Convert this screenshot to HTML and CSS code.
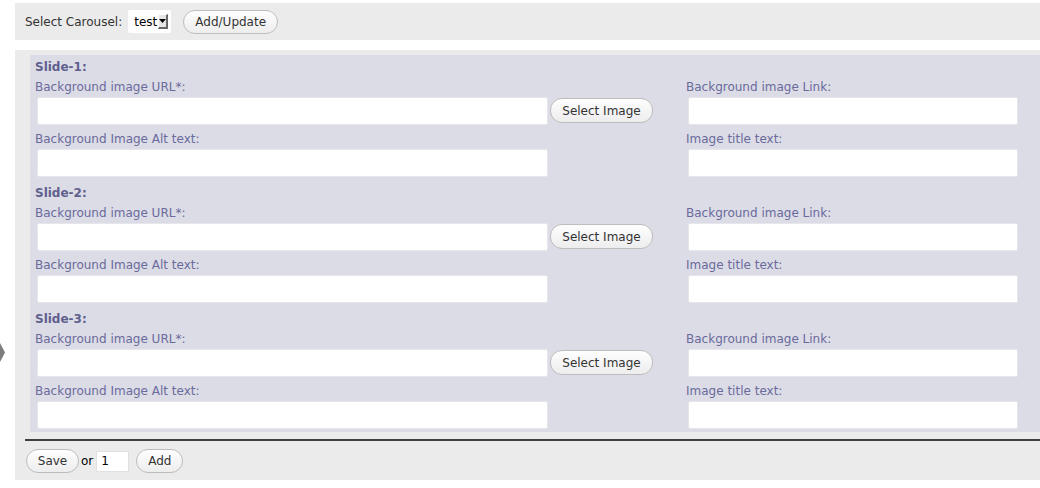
FILE: index.html
```html
<!DOCTYPE html>
<html>
<head>
<meta charset="utf-8">
<link rel="stylesheet" href="styles.css">
</head>
<body>
<div class="arrow"></div>
<div class="page">
  <div class="topbar">
    <span class="tlabel">Select Carousel:</span>
    <span class="select"><span class="sval">test</span><span class="sbtn"><svg width="7" height="4" viewBox="0 0 7 4"><path d="M0 0H7L3.5 4Z" fill="#000"/></svg></span></span>
    <button class="btn btn-top">Add/Update</button>
  </div>
  <div class="main">
    <div class="slides">
      <div class="slide">
        <div class="stitle">Slide-1:</div>
        <div class="grid">
          <label class="lbl">Background image URL*:</label>
          <span></span>
          <label class="lbl">Background image Link:</label>
          <input class="inp inp-l" type="text">
          <button class="btn btn-sel">Select Image</button>
          <input class="inp inp-r" type="text">
          <label class="lbl lbl2">Background Image Alt text:</label>
          <span></span>
          <label class="lbl lbl2">Image title text:</label>
          <input class="inp inp-l" type="text">
          <span></span>
          <input class="inp inp-r" type="text">
        </div>
      </div>
      <div class="slide">
        <div class="stitle">Slide-2:</div>
        <div class="grid">
          <label class="lbl">Background image URL*:</label>
          <span></span>
          <label class="lbl">Background image Link:</label>
          <input class="inp inp-l" type="text">
          <button class="btn btn-sel">Select Image</button>
          <input class="inp inp-r" type="text">
          <label class="lbl lbl2">Background Image Alt text:</label>
          <span></span>
          <label class="lbl lbl2">Image title text:</label>
          <input class="inp inp-l" type="text">
          <span></span>
          <input class="inp inp-r" type="text">
        </div>
      </div>
      <div class="slide">
        <div class="stitle">Slide-3:</div>
        <div class="grid">
          <label class="lbl">Background image URL*:</label>
          <span></span>
          <label class="lbl">Background image Link:</label>
          <input class="inp inp-l" type="text">
          <button class="btn btn-sel">Select Image</button>
          <input class="inp inp-r" type="text">
          <label class="lbl lbl2">Background Image Alt text:</label>
          <span></span>
          <label class="lbl lbl2">Image title text:</label>
          <input class="inp inp-l" type="text">
          <span></span>
          <input class="inp inp-r" type="text">
        </div>
      </div>
    </div>
    <div class="footer">
      <button class="btn btn-save">Save</button>
      <span class="or">or</span>
      <input class="num" type="text" value="1">
      <button class="btn btn-add">Add</button>
    </div>
  </div>
</div>
</body>
</html>
```

FILE: styles.css
```css
* { box-sizing: border-box; }
html, body { margin: 0; padding: 0; background: #fff; }
body {
  font-family: "DejaVu Sans", sans-serif;
  font-size: 12px;
  color: #333;
  width: 1040px;
  height: 488px;
  overflow: hidden;
  position: relative;
}
.arrow {
  position: absolute;
  left: 0;
  top: 343px;
  width: 5px;
  height: 19px;
  background: #7d7d7d;
  clip-path: polygon(0 0, 100% 50%, 0 100%);
}
.page { margin-left: 15px; padding-top: 3px; }
.topbar {
  height: 37px;
  background: #ebebeb;
  display: flex;
  align-items: center;
  padding-left: 10px;
}
.tlabel { color: #333; margin-right: 6px; }
.select {
  display: inline-flex;
  align-items: center;
  height: 23px;
  width: 43px;
  background: #fff;
  border-radius: 2px;
  padding-left: 6px;
  color: #000;
}
.sval { font-size: 12px; }
.sbtn {
  display: inline-flex;
  align-items: center;
  justify-content: center;
  width: 10px;
  height: 15px;
  margin-left: 1px;
  background: #e6e6e6;
  border-right: 2px solid #666;
  border-bottom: 2px solid #666;
  border-top: 1px solid #fff;
  border-left: 1px solid #fff;
}
.btn {
  font-family: "DejaVu Sans", sans-serif;
  font-size: 12px;
  color: #333;
  height: 24px;
  border: 1px solid #bdbdbd;
  border-radius: 12px;
  background: linear-gradient(#fefefe, #ededed);
  padding: 0 11px;
  cursor: pointer;
}
.btn-top { margin-left: 12px; width: 95px; height: 24px; padding: 0; }
.main {
  margin-top: 10px;
  background: #ebebeb;
  padding: 5px 0 0 15px;
  height: 430px;
}
.slides {
  background: #dcdce6;
  padding: 1px 0 3px 5px;
  display: flex;
  flex-direction: column;
  gap: 5px;
}
.stitle {
  font-weight: bold;
  color: #5f5f8e;
  font-size: 12px;
  line-height: 22px;
  height: 20px;
}
.grid {
  display: grid;
  grid-template-columns: 515px 136px 340px;
  align-items: start;
}
.lbl {
  color: #6a6a9c;
  font-size: 12px;
  line-height: 22px;
  height: 21px;
}
.lbl2 { margin-top: 3px; }
.inp {
  height: 28px;
  background: #fff;
  border: 1px solid #e6e6ec;
  border-radius: 2px;
  font-size: 12px;
  outline: none;
}
.inp-l { width: 511px; margin-left: 2px; }
.inp-r { width: 330px; margin-left: 2px; }
.btn-sel { width: 103px; height: 25px; margin-top: 1px; padding: 0; }
.footer {
  margin-left: -5px;
  margin-top: 7px;
  border-top: 2px solid #3f3f3f;
  padding: 8px 0 0 1px;
  display: flex;
  align-items: center;
}
.btn-save { width: 53px; padding: 0; }
.or { margin: 0 3px 0 2px; color: #000; }
.num {
  width: 33px;
  height: 21px;
  border: 1px solid #e0e0e0;
  background: #fff;
  font-family: "DejaVu Sans", sans-serif;
  font-size: 12px;
  padding: 0 4px;
  color: #000;
  outline: none;
}
.btn-add { width: 47px; padding: 0; margin-left: 7px; }
```
